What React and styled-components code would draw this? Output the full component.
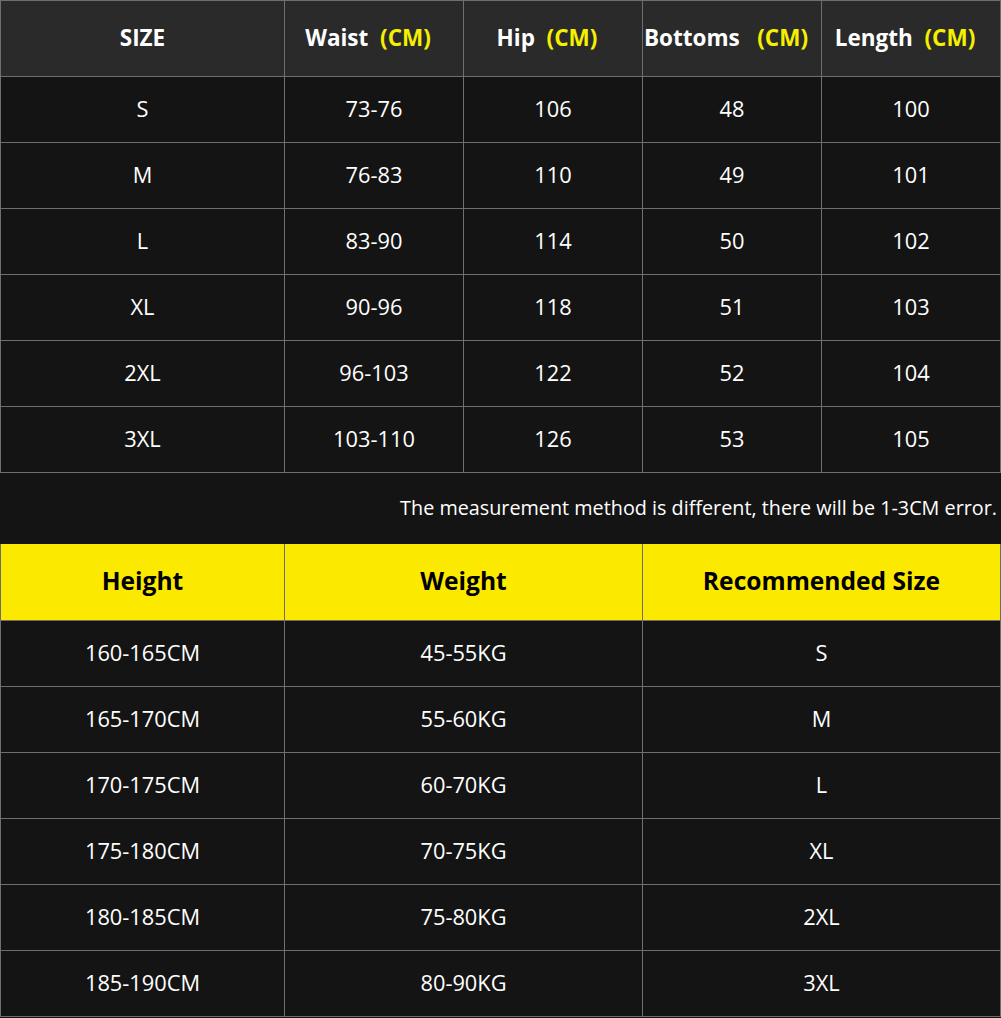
import React from "react";
import styled, { createGlobalStyle } from "styled-components";

const Global = createGlobalStyle`
  html, body { margin: 0; padding: 0; background: #141414; }
  body { font-family: "Open Sans", "Noto Sans", "Liberation Sans", sans-serif; }
`;

const Page = styled.div`
  width: 1001px;
  background: #141414;
`;

const Grid = styled.div`
  display: grid;
  grid-template-columns: ${(p) => p.$cols};
  gap: 1px;
  background: #6e6e6e;
  padding: ${(p) => p.$pad};
`;

const Cell = styled.div`
  display: flex;
  align-items: center;
  justify-content: center;
  box-sizing: border-box;
  height: ${(p) => p.$h}px;
  padding: 0 ${(p) => p.$shift || 0}px 3px 0;
  background: ${(p) => p.$bg};
  color: ${(p) => p.$fg};
  font-size: ${(p) => p.$size}px;
  font-weight: ${(p) => (p.$bold ? 700 : 400)};
  white-space: pre;
`;

const Unit = styled.span`
  color: #f5f000;
`;

const Note = styled.div`
  box-sizing: border-box;
  height: 71px;
  display: flex;
  align-items: center;
  justify-content: flex-end;
  padding: 0 4px 2px 0;
  color: #ffffff;
  font-size: 19.8px;
  background: #141414;
`;

const sizeHead = [
  ["SIZE", null],
  ["Waist  ", "(CM)"],
  ["Hip  ", "(CM)"],
  ["Bottoms   ", "(CM)"],
  ["Length  ", "(CM)"],
];

const sizeRows = [
  ["S", "73-76", "106", "48", "100"],
  ["M", "76-83", "110", "49", "101"],
  ["L", "83-90", "114", "50", "102"],
  ["XL", "90-96", "118", "51", "103"],
  ["2XL", "96-103", "122", "52", "104"],
  ["3XL", "103-110", "126", "53", "105"],
];

const recHead = ["Height", "Weight", "Recommended Size"];
const recRows = [
  ["160-165CM", "45-55KG", "S"],
  ["165-170CM", "55-60KG", "M"],
  ["170-175CM", "60-70KG", "L"],
  ["175-180CM", "70-75KG", "XL"],
  ["180-185CM", "75-80KG", "2XL"],
  ["185-190CM", "80-90KG", "3XL"],
];

export default function App() {
  return (
    <Page>
      <Global />
      <Grid $cols="283px 178px 178px 178px 178px" $pad="1px">
        {sizeHead.map(([t, u], i) => (
          <Cell
            key={"h" + i}
            $h={75}
            $bg="#2a2a2a"
            $fg="#ffffff"
            $bold
            $size={22.5}
            $shift={u ? 12 : 0}
          >
            {t}
            {u && <Unit>{u}</Unit>}
          </Cell>
        ))}
        {sizeRows.map((r, ri) =>
          r.map((v, ci) => (
            <Cell key={ri + "-" + ci} $h={65} $bg="#141414" $fg="#ffffff" $size={21.8}>
              {v}
            </Cell>
          ))
        )}
      </Grid>
      <Note>The measurement method is different, there will be 1-3CM error.</Note>
      <Grid $cols="283px 357px 357px" $pad="0 1px 1px 1px">
        {recHead.map((t, i) => (
          <Cell key={"rh" + i} $h={76} $bg="#fce900" $fg="#000000" $bold $size={24.6}>
            {t}
          </Cell>
        ))}
        {recRows.map((r, ri) =>
          r.map((v, ci) => (
            <Cell key={"r" + ri + "-" + ci} $h={65} $bg="#141414" $fg="#ffffff" $size={21.8}>
              {v}
            </Cell>
          ))
        )}
      </Grid>
    </Page>
  );
}
